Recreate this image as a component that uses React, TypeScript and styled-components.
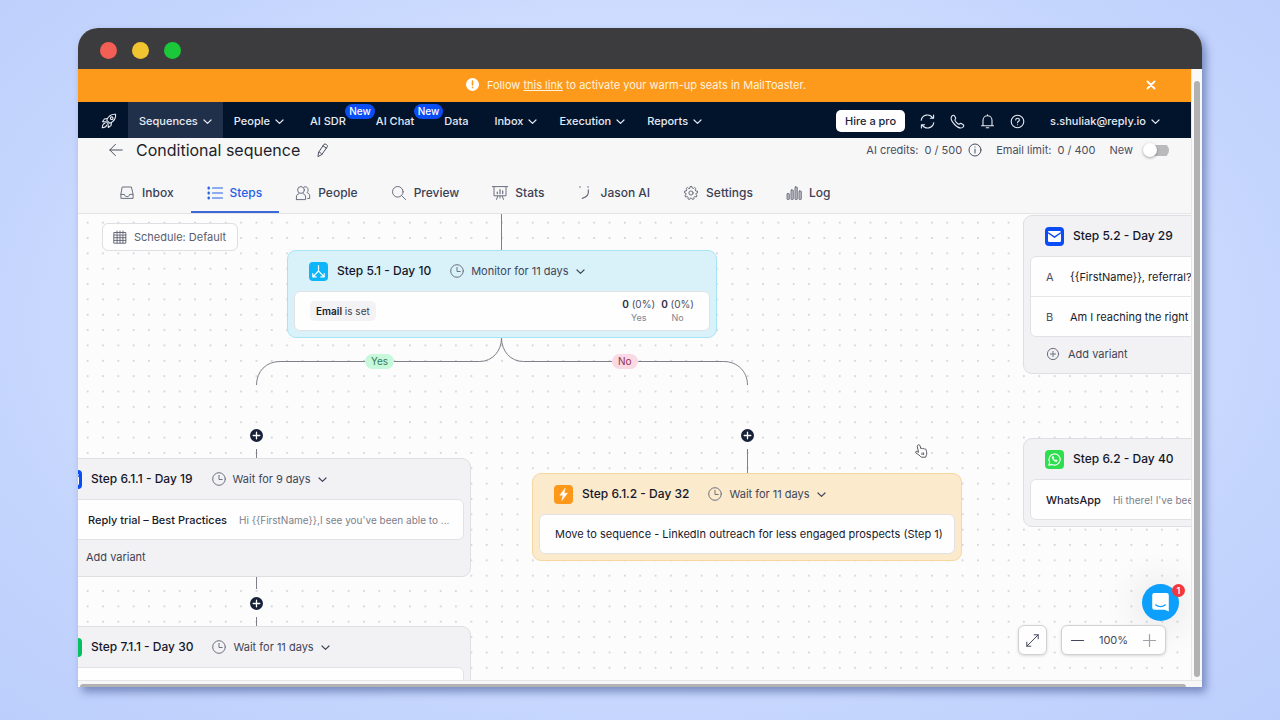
import React from "react";
import styled, { createGlobalStyle, css } from "styled-components";

const GlobalStyle = createGlobalStyle`
  *, *::before, *::after { box-sizing: border-box; }
  body {
    margin: 0;
    font-family: Inter, "Liberation Sans", sans-serif;
    font-size: 11px;
    line-height: 16px;
    color: #3b3f52;
  }
  button, input { font: inherit; color: inherit; }
  button { background: none; border: 0; padding: 0; cursor: pointer; }
  a { color: inherit; }
  svg { display: block; flex: none; overflow: visible; }
  p, h1, h2 { margin: 0; font: inherit; }
`;

/* ---------- icons ---------- */

type IconProps = {
  w?: number;
  h?: number;
  sw?: number;
  children: React.ReactNode;
};

const Icon = ({ w = 14, h = w, sw = 1, children }: IconProps) => (
  <svg
    width={w}
    height={h}
    viewBox={`0 0 ${w} ${h}`}
    fill="none"
    stroke="currentColor"
    strokeWidth={sw}
    strokeLinecap="round"
    strokeLinejoin="round"
    aria-hidden="true"
  >
    {children}
  </svg>
);

const Chevron = () => (
  <Icon w={9} sw={1.2}>
    <path d="M1 3l3.5 3.4L8 3" />
  </Icon>
);

const ClockIcon = () => (
  <Icon w={14}>
    <circle cx="7" cy="7" r="6.3" />
    <path d="M7 3.4V7.5h3.2" />
  </Icon>
);

const PlusCircle = () => (
  <Icon w={12}>
    <circle cx="6" cy="6" r="5.6" />
    <path d="M6 3.4v5.2M3.4 6h5.2" />
  </Icon>
);

const PlusSmall = () => (
  <Icon w={7} sw={1.3}>
    <path d="M3.5 .2v6.6M.2 3.5h6.6" />
  </Icon>
);

const RocketIcon = () => (
  <Icon w={16} sw={1.1}>
    <path d="M14.6 1.3c-3.7-.4-7 1.4-8.9 5.8l3.2 3.2c4.4-2 6.1-5.300 5.700-9z" />
    <circle cx="10.7" cy="5.2" r="1.3" />
    <path d="M6.400 5.500l-3 .5-1.900 2.700 3.300.2M10.500 9.500l-.5 3.100-2.700 1.900-.2-3.300" />
    <path d="M3.900 10.300c-1.500.3-2.500 1.900-2.600 4.400 2.500-.1 4-1.100 4.400-2.600M5.300 8.900l1.800 1.800" />
  </Icon>
);

const gear = Array.from({ length: 9 }, (_, i) => {
  const point = (deg: number, r: number) => {
    const a = ((i * 40 + deg - 90) * Math.PI) / 180;
    return `${(7 + r * Math.cos(a)).toFixed(2)} ${(7 + r * Math.sin(a)).toFixed(2)}`;
  };
  return [point(-12, 5.2), point(-8, 6.6), point(8, 6.6), point(12, 5.2)].join("L");
}).join("L");

const tabIcons: Record<string, React.ReactNode> = {
  Inbox: (
    <Icon w={14}>
      <path d="M2.6 1h8.8l1.700 7.400v4H.9v-4z" />
      <path d="M1 8.400h3.400c.2 3 5 3 5.200 0H13" />
    </Icon>
  ),
  Steps: (
    <Icon w={14} sw={1.2}>
      <path d="M4.500 2h10M4.500 7h10M4.500 12h10" />
      <path d="M.7 1.800v.6M.7 6.700v.6M.7 11.600v.6" strokeWidth="2.4" />
    </Icon>
  ),
  People: (
    <Icon w={14}>
      <circle cx="5" cy="4" r="3.4" />
      <path d="M.4 13.600v-2.600c0-1.700.9-2.800 2.400-3.300M7.200 7.700c1.500.5 2.400 1.600 2.400 3.300v2.600H.4" />
      <path d="M8.400.8c3.200-.8 4.900 2.700 2.800 5.900 1.500.6 2.500 1.500 2.500 3.200v2.600h-2" />
    </Icon>
  ),
  Preview: (
    <Icon w={14}>
      <circle cx="5.800" cy="5.800" r="5.300" />
      <path d="M9.700 9.700l3.900 3.900" />
    </Icon>
  ),
  Stats: (
    <Icon w={14}>
      <path d="M-.7 .6h15.400M1 .6v9.200h12V.6M4.800 10l-1.300 3.400M9.200 10l1.300 3.400M7 10v2" />
      <path d="M4.300 7.600V6M7 7.600V3.500M9.700 7.600V4.800" strokeWidth="1.2" />
    </Icon>
  ),
  "Jason AI": (
    <Icon w={14} sw={1.2}>
      <path d="M10.300 3.800c.7 4-1.800 7.300-6 8.500" />
      <path d="M2 1.100h.1M10 1.100h.1" strokeWidth="1.5" />
    </Icon>
  ),
  Settings: (
    <Icon w={14}>
      <path d={`M${gear}z`} />
      <circle cx="7" cy="7" r="2.1" />
    </Icon>
  ),
  Log: (
    <Icon w={14}>
      <g fill="#b9bbc6" strokeWidth="0.9">
        <rect x="0" y="7.500" width="2.3" height="6" rx="0.5" />
        <rect x="4" y="4" width="2.3" height="9.500" rx="0.5" />
        <rect x="8" y="1" width="2.3" height="12.500" rx="0.5" />
        <rect x="12" y="5" width="2.3" height="8.500" rx="0.5" />
      </g>
    </Icon>
  ),
};

/* ---------- window ---------- */

const Desktop = styled.div`
  min-height: 100vh;
  padding: 28px 78px 33px;
  display: flex;
  background: radial-gradient(ellipse at 50% 45%, #d9e6ff 0%, #d2e0ff 45%, #c3d4fd 75%, #bccefb 100%);
`;

const Window = styled.main`
  flex: 1;
  min-width: 0;
  display: flex;
  flex-direction: column;
  border-radius: 20px 20px 0 0;
  background: #f7f7f8;
  box-shadow: 4px 5px 9px rgba(68, 88, 150, 0.6);
`;

const TitleBar = styled.header`
  height: 41px;
  padding: 4px 22px 0;
  display: flex;
  align-items: center;
  gap: 15px;
  border-radius: 20px 20px 0 0;
  background: #3c3b3d;
`;

const Light = styled.span<{ $color: string }>`
  width: 17px;
  height: 17px;
  border-radius: 50%;
  background: ${(p) => p.$color};
`;

const Viewport = styled.div`
  flex: 1;
  display: grid;
  grid-template-columns: minmax(0, 1fr) 11px;
`;

const Page = styled.div`
  display: flex;
  flex-direction: column;
  overflow: hidden;
`;

const VerticalTrack = styled.div`
  padding: 12px 2px 3px;
  display: flex;
  border-left: 1px solid #e6e6e8;
  background: #f9f9fa;
`;

const HorizontalTrack = styled.div`
  height: 7px;
  padding: 3px 16px 0 2px;
  display: flex;
  border-top: 1px solid #e6e6e8;
  background: #f7f7f8;
`;

const Thumb = styled.div<{ $flat?: boolean }>`
  flex: 1;
  border-radius: ${(p) => (p.$flat ? "3px 3px 0 0" : "3px")};
  background: #b2b2b3;
`;

/* ---------- banner ---------- */

const Banner = styled.div`
  height: 33px;
  padding: 0 35px 2px 38px;
  display: grid;
  grid-template-columns: 1fr auto 1fr;
  align-items: center;
  background: #fd991b;
  color: #fff3de;
`;

const BannerText = styled.p`
  grid-column: 2;
  display: flex;
  align-items: center;
  gap: 8px;
`;

const Close = styled.button`
  justify-self: end;
  color: #fff;
`;

/* ---------- navigation ---------- */

const Nav = styled.nav`
  height: 36px;
  display: flex;
  align-items: stretch;
  background: #02132c;
  color: #e6ebf3;
  font-weight: 500;
`;

const Brand = styled.a`
  padding: 2px 10px 0 23px;
  display: flex;
  align-items: center;
  margin-right: 1px;
`;

const NavItem = styled.a<{ $active?: boolean; $plain?: boolean }>`
  position: relative;
  padding: 2px ${(p) => (p.$plain ? 15 : 11)}px 0;
  display: flex;
  align-items: center;
  gap: 5px;
  text-decoration: none;
  white-space: nowrap;
  ${(p) => p.$active && css`background: #21304a;`}
`;

const NewBadge = styled.span`
  position: absolute;
  z-index: 1;
  top: 2px;
  right: -14px;
  padding: 0 4px;
  border-radius: 8px;
  background: #0b4df5;
  color: #fff;
  font-size: 10px;
  line-height: 15px;
`;

const NavTools = styled.div`
  margin-left: auto;
  padding: 2px 31px 0 0;
  display: flex;
  align-items: center;
  gap: 15px;
`;

const HireButton = styled.button`
  height: 22px;
  padding: 0 9px;
  border-radius: 5px;
  background: #fff;
  color: #20263a;
  white-space: nowrap;
`;

const Account = styled.button`
  margin-left: 10px;
  display: flex;
  align-items: center;
  gap: 5px;
`;

/* ---------- sequence header ---------- */

const SequenceHeader = styled.header`
  height: 76px;
  display: flex;
  flex-direction: column;
  justify-content: space-between;
  border-bottom: 1px solid #e4e4e7;
  background: #f7f7f8;
`;

const TitleRow = styled.div`
  height: 24px;
  padding: 0 22px 0 31px;
  display: flex;
  align-items: center;
  color: #4b4e60;
`;

const Title = styled.h1`
  margin: 0 17px 0 13px;
  font-size: 16px;
  line-height: 24px;
  color: #1d1f2b;
  white-space: nowrap;
`;

const Credits = styled.div`
  margin-left: auto;
  display: flex;
  align-items: center;
  gap: 14px;
  white-space: nowrap;
`;

const Credit = styled.span`
  display: flex;
  align-items: center;
  gap: 6px;
`;

const Toggle = styled.label`
  display: flex;
  align-items: center;
  gap: 10px;
`;

const Switch = styled.input`
  appearance: none;
  width: 26px;
  height: 15px;
  margin: 0;
  display: flex;
  align-items: center;
  border-radius: 8px;
  background: linear-gradient(#bababd, #bababd) 100% 50% / 22px 11px no-repeat;
  &::before {
    content: "";
    width: 14px;
    height: 14px;
    border-radius: 50%;
    background: #fff;
    box-shadow: 0 1px 3px rgba(0, 0, 0, 0.35);
  }
`;

const Tabs = styled.nav`
  height: 42px;
  padding-left: 25px;
  display: flex;
`;

const Tab = styled.a<{ $active?: boolean }>`
  padding: 3px 17px 0;
  display: flex;
  align-items: center;
  gap: 8px;
  border-bottom: 2px solid ${(p) => (p.$active ? "#3c68d8" : "transparent")};
  color: ${(p) => (p.$active ? "#2560e6" : "#3b3f54")};
  font-size: 12px;
  font-weight: 500;
  text-decoration: none;
  white-space: nowrap;
  svg { color: ${(p) => (p.$active ? "#2560e6" : "#6c6f7e")}; }
`;

/* ---------- canvas ---------- */

const Canvas = styled.section`
  position: relative;
  flex: 1;
  min-height: 440px;
  overflow: hidden;
  background: #fcfcfd;
`;

const Layer = styled.svg`
  position: absolute;
  inset: 0;
  width: 100%;
  height: 100%;
`;

const Schedule = styled.button`
  position: absolute;
  top: 9px;
  left: 24px;
  height: 28px;
  padding: 0 11px 0 10px;
  display: flex;
  align-items: center;
  gap: 7px;
  border: 1px solid #dedee3;
  border-radius: 6px;
  background: #fefefe;
  color: #5a5d6e;
  white-space: nowrap;
`;

const tones = {
  grey: { bg: "#f2f2f4", line: "#dfdfe3" },
  blue: { bg: "#d9f2fa", line: "#a6e4f6" },
  amber: { bg: "#fbeacc", line: "#f6d7a0" },
};

const Card = styled.article<{ $x: number; $y: number; $tone: keyof typeof tones; $variants?: boolean }>`
  position: absolute;
  left: ${(p) => p.$x}px;
  top: ${(p) => p.$y}px;
  width: 430px;
  padding: 0 6px ${(p) => (p.$variants ? 3 : 6)}px;
  border: 1px solid ${(p) => tones[p.$tone].line};
  border-radius: 9px;
  background: ${(p) => tones[p.$tone].bg};
`;

const CardHead = styled.header`
  height: 40px;
  padding-left: 15px;
  display: flex;
  align-items: center;
`;

const Tile = styled.span<{ $color: string }>`
  width: 19px;
  height: 19px;
  display: flex;
  align-items: center;
  justify-content: center;
  border-radius: 4px;
  background: ${(p) => p.$color};
  color: #fff;
`;

const CardTitle = styled.h2`
  margin: 0 19px 0 9px;
  font-size: 12px;
  font-weight: 500;
  color: #14172b;
  white-space: nowrap;
`;

const Wait = styled.button`
  display: flex;
  align-items: center;
  gap: 7px;
  color: #3f4558;
  white-space: nowrap;
  svg:first-child { color: #6d7080; }
`;

const Body = styled.div`
  border: 1px solid #e2e2e6;
  border-radius: 6px;
  background: #fefefe;
`;

const Row = styled.div<{ $compact?: boolean }>`
  height: ${(p) => (p.$compact ? 38 : 39)}px;
  padding: 0 15px;
  display: flex;
  align-items: center;
  color: #171a2c;
  white-space: nowrap;
  & + & {
    height: 40px;
    border-top: 1px solid #e6e6e9;
  }
`;

const Letter = styled.span`
  flex: none;
  width: 24px;
  color: #4a4d5e;
`;

const Subject = styled.span`
  font-weight: 500;
`;

const Snippet = styled.span`
  margin-left: 12px;
  font-size: 10px;
  color: #7c7f8c;
`;

const Chip = styled.span`
  padding: 2px 6px;
  border-radius: 5px;
  background: #f3f3f5;
  font-size: 10px;
  color: #3f4254;
  b { font-weight: 600; color: #171a2c; }
`;

const Counts = styled.div`
  margin-left: auto;
  display: flex;
  gap: 6px;
`;

const Count = styled.p`
  display: flex;
  flex-direction: column;
  align-items: center;
  font-size: 10px;
  line-height: 13px;
  color: #4a4d5e;
  b { font-weight: 600; color: #2a2d3e; }
  small { font-size: 9px; color: #80838f; }
`;

const AddVariant = styled.button`
  height: 33px;
  padding-left: 17px;
  display: flex;
  align-items: center;
  gap: 9px;
  color: #3f4254;
  svg { color: #6d7080; }
`;

const Pill = styled.span<{ $x: number; $tone: "yes" | "no" }>`
  position: absolute;
  left: ${(p) => p.$x}px;
  top: 140px;
  padding: 0 6px;
  border-radius: 8px;
  font-size: 10px;
  line-height: 15px;
  background: ${(p) => (p.$tone === "yes" ? "#c6f8dc" : "#fbd9e2")};
  color: ${(p) => (p.$tone === "yes" ? "#397a5b" : "#93304f")};
`;

const AddStep = styled.button<{ $x: number; $y: number }>`
  position: absolute;
  left: ${(p) => p.$x}px;
  top: ${(p) => p.$y}px;
  width: 13px;
  height: 13px;
  display: flex;
  align-items: center;
  justify-content: center;
  border-radius: 50%;
  background: #18213a;
  color: #fff;
`;

const Controls = styled.div`
  position: absolute;
  right: 25px;
  bottom: 25px;
  display: flex;
  align-items: center;
  gap: 14px;
`;

const ControlBox = styled.div`
  height: 30px;
  display: flex;
  align-items: center;
  border: 1px solid #d2d2d6;
  border-radius: 6px;
  background: #fefefe;
  box-shadow: 0 1px 3px rgba(0, 0, 0, 0.15);
  color: #44475a;
`;

const ControlButton = styled.button<{ $wide?: boolean; $muted?: boolean }>`
  width: ${(p) => (p.$wide ? 31 : 27)}px;
  height: 28px;
  display: flex;
  align-items: center;
  justify-content: center;
  opacity: ${(p) => (p.$muted ? 0.5 : 1)};
`;

const ZoomValue = styled.output`
  width: 41px;
  text-align: center;
`;

const Chat = styled.button`
  position: absolute;
  right: 12px;
  bottom: 59px;
  width: 37px;
  height: 37px;
  display: flex;
  align-items: center;
  justify-content: center;
  border-radius: 50%;
  background: #0c9ffb;
  box-shadow: 0 2px 40px rgba(0, 0, 0, 0.16);
`;

const Unread = styled.span`
  position: absolute;
  top: 0;
  right: -6px;
  width: 13px;
  height: 13px;
  border-radius: 50%;
  background: #f2383c;
  color: #fff;
  font-size: 9px;
  font-weight: 600;
  line-height: 13px;
  text-align: center;
`;

const Pointer = styled.svg`
  position: absolute;
  left: 837px;
  top: 230px;
`;

const MailIcon = () => (
  <Icon w={13} h={11}>
    <rect x="0.5" y="0.5" width="12" height="10" rx="0.5" fill="#fff" />
    <path d="M.5 2l6 4.200 6-4.200" stroke="#0b4df5" strokeWidth="1.5" />
  </Icon>
);

const BranchIcon = () => (
  <Icon w={13} sw={1.2}>
    <path d="M6.500 .5v5.500L1.200 11.600M6.500 6l5.300 5.600M.8 8.500v3.400h3.400M12.200 8.500v3.400H8.800" />
  </Icon>
);

const BoltIcon = () => (
  <Icon w={13}>
    <path d="M8 .5L2.800 7.200h3.200L4.800 12.500l5.600-7.300H7.200z" fill="currentColor" strokeWidth="0.5" />
  </Icon>
);

const WhatsAppIcon = () => (
  <Icon w={13} sw={1.1}>
    <path d="M.8 12.200l.9-3A5.600 5.600 0 1 1 3.900 11.400z" />
    <path
      d="M4.500 3.500c-.8.6-.5 2 .8 3.500 1.400 1.500 3 2.100 3.900 1.200l.2-.8-1.400-.7-.8.6c-.9-.4-1.400-1-1.800-1.800l.5-.7-.6-1.300z"
      fill="currentColor"
      strokeWidth="0.4"
    />
  </Icon>
);

type StepCardProps = {
  x: number;
  y: number;
  tone?: keyof typeof tones;
  color: string;
  icon?: React.ReactNode;
  title: string;
  wait?: string;
  variants?: boolean;
  children: React.ReactNode;
};

const StepCard = ({ x, y, tone = "grey", color, icon, title, wait, variants, children }: StepCardProps) => (
  <Card $x={x} $y={y} $tone={tone} $variants={variants}>
    <CardHead>
      <Tile $color={color}>{icon}</Tile>
      <CardTitle>{title}</CardTitle>
      {wait && (
        <Wait>
          <ClockIcon />
          {wait}
          <Chevron />
        </Wait>
      )}
    </CardHead>
    <Body>{children}</Body>
    {variants && (
      <AddVariant>
        <PlusCircle />
        Add variant
      </AddVariant>
    )}
  </Card>
);

export default function App() {
  return (
    <>
      <GlobalStyle />
      <Desktop>
        <Window>
          <TitleBar>
            <Light $color="#f45f55" />
            <Light $color="#f1c52f" />
            <Light $color="#1bc83a" />
          </TitleBar>
          <Viewport>
            <Page>
              <Banner>
                <BannerText>
                  <svg width="13" height="13" viewBox="0 0 13 13" aria-hidden="true">
                    <circle cx="6.500" cy="6.500" r="6.500" fill="#fff" />
                    <path d="M6.500 3v4M6.500 9.200v.4" stroke="#fd991b" strokeWidth="1.6" strokeLinecap="round" />
                  </svg>
                  <span>
                    Follow <a href="#activate">this link</a> to activate your warm-up seats in MailToaster.
                  </span>
                </BannerText>
                <Close aria-label="Dismiss">
                  <Icon w={10} sw={1.8}>
                    <path d="M1.500 1.500l7 7M8.500 1.500l-7 7" />
                  </Icon>
                </Close>
              </Banner>

              <Nav>
                <Brand href="#home" aria-label="Home">
                  <RocketIcon />
                </Brand>
                <NavItem href="#sequences" $active>Sequences <Chevron /></NavItem>
                <NavItem href="#people">People <Chevron /></NavItem>
                <NavItem href="#sdr" $plain>AI SDR<NewBadge>New</NewBadge></NavItem>
                <NavItem href="#chat" $plain>AI Chat<NewBadge>New</NewBadge></NavItem>
                <NavItem href="#data" $plain>Data</NavItem>
                <NavItem href="#inbox">Inbox <Chevron /></NavItem>
                <NavItem href="#execution">Execution <Chevron /></NavItem>
                <NavItem href="#reports">Reports <Chevron /></NavItem>
                <NavTools>
                  <HireButton>Hire a pro</HireButton>
                  <button aria-label="Sync">
                    <Icon w={15} sw={1.1}>
                      <path d="M1.200 6.300a6.300 6.300 0 0 1 11.500-2.400M13.800 8.700a6.300 6.300 0 0 1-11.500 2.400M13.600 1v3.200h-3.200M1.400 14v-3.200h3.200" />
                    </Icon>
                  </button>
                  <button aria-label="Calls">
                    <Icon w={15} sw={1.1}>
                      <path d="M1.600 2.300C3 .7 4 1 4.700 2.200l.9 1.600c.4.8 0 1.300-.6 1.900-.3.4 0 .9.4 1.500.8 1.100 1.500 1.800 2.500 2.500.6.4 1 .6 1.400.3.6-.6 1.200-.9 1.900-.5l1.700 1c1.200.8 1.300 1.600-.2 2.900C8.400 16.100-.9 6.700 1.600 2.300z" />
                    </Icon>
                  </button>
                  <button aria-label="Notifications">
                    <Icon w={15} sw={1.1}>
                      <path d="M3 11.700V6.200a4.500 4.500 0 0 1 9 0v5.500M1.500 11.800h12M6.200 13.800h2.600M7.500 1.600V.8" />
                    </Icon>
                  </button>
                  <button aria-label="Help">
                    <Icon w={15} sw={1.1}>
                      <circle cx="7.500" cy="7.500" r="6.300" />
                      <path d="M5.700 6c.1-2.300 3.700-2.200 3.700 0 0 1.300-1.900 1.300-1.900 2.800M7.500 10.700v.1" />
                    </Icon>
                  </button>
                  <Account>s.shuliak@reply.io <Chevron /></Account>
                </NavTools>
              </Nav>

              <SequenceHeader>
                <TitleRow>
                  <button aria-label="Back">
                    <Icon w={14}>
                      <path d="M.8 7h12.400M6.400 1.400L.8 7l5.600 5.600" />
                    </Icon>
                  </button>
                  <Title>Conditional sequence</Title>
                  <button aria-label="Rename">
                    <Icon w={12} h={14}>
                      <path d="M1 13.200l.6-3.900L7 1.300c.9-1.200 4.200 1 3.400 2.300L5 11.300zM6 2.900l3.500 2.300M1.700 9.300c1.400 0 2.800.8 3.200 2" />
                    </Icon>
                  </button>
                  <Credits>
                    <Credit>
                      <span>AI credits:</span>
                      <span>0 / 500</span>
                      <Icon w={14}>
                        <circle cx="7" cy="7" r="6" />
                        <path d="M7 6.200v3.800M7 3.900v.2" />
                      </Icon>
                    </Credit>
                    <Credit>
                      <span>Email limit:</span>
                      <span>0 / 400</span>
                    </Credit>
                    <Toggle>
                      New
                      <Switch type="checkbox" />
                    </Toggle>
                  </Credits>
                </TitleRow>
                <Tabs>
                  {Object.keys(tabIcons).map((name) => (
                    <Tab key={name} href={`#${name}`} $active={name === "Steps"}>
                      {tabIcons[name]}
                      {name}
                    </Tab>
                  ))}
                </Tabs>
              </SequenceHeader>

              <Canvas>
                <Layer aria-hidden="true">
                  <defs>
                    <pattern id="grid" x="2" y="1" width="15.35" height="15.35" patternUnits="userSpaceOnUse">
                      <circle cx="7.6" cy="7.6" r="0.8" fill="#bfc1ca" />
                    </pattern>
                  </defs>
                  <rect width="100%" height="100%" fill="url(#grid)" />
                  <g fill="none" stroke="#7d8086">
                    <path d="M423.500 0v37M178.500 235v10M669.500 235v25M178.500 363v12M178.500 403v10" />
                    <path d="M423.500 124c0 13-9 23.500-22 23.500H202c-14 0-23.500 10-23.500 23.500" />
                    <path d="M423.500 124c0 13 9 23.500 22 23.500h200c14 0 24 10 24 23.500" />
                  </g>
                </Layer>

                <Schedule>
                  <Icon w={14}>
                    <path
                      d="M1.200 2.500h11.600v10.700H1.200zM1.200 5h11.600M4 1v2.500M7 1v2.500M10 1v2.500M1.200 7.700h11.600M1.200 10.400h11.600M4.100 5v8M7 5v8M9.900 5v8"
                      strokeWidth="0.9"
                    />
                  </Icon>
                  Schedule: Default
                </Schedule>

                <StepCard x={209} y={36} tone="blue" color="#0db5fa" icon={<BranchIcon />} title="Step 5.1 - Day 10" wait="Monitor for 11 days">
                  <Row $compact>
                    <Chip><b>Email</b> is set</Chip>
                    <Counts>
                      <Count><span><b>0</b> (0%)</span><small>Yes</small></Count>
                      <Count><span><b>0</b> (0%)</span><small>No</small></Count>
                    </Counts>
                  </Row>
                </StepCard>
                <Pill $x={287} $tone="yes">Yes</Pill>
                <Pill $x={534} $tone="no">No</Pill>

                <AddStep $x={172} $y={215} aria-label="Add step"><PlusSmall /></AddStep>
                <AddStep $x={663} $y={215} aria-label="Add step"><PlusSmall /></AddStep>
                <AddStep $x={172} $y={383} aria-label="Add step"><PlusSmall /></AddStep>

                <StepCard x={-37} y={244} color="#0b4df5" icon={<MailIcon />} title="Step 6.1.1 - Day 19" wait="Wait for 9 days" variants>
                  <Row>
                    <Letter />
                    <Subject>Reply trial – Best Practices</Subject>
                    <Snippet>Hi {"{{FirstName}}"},I see you've been able to ...</Snippet>
                  </Row>
                </StepCard>

                <StepCard x={-37} y={412} color="#05bf63" title="Step 7.1.1 - Day 30" wait="Wait for 11 days">
                  <Row />
                </StepCard>

                <StepCard x={454} y={259} tone="amber" color="#fd981a" icon={<BoltIcon />} title="Step 6.1.2 - Day 32" wait="Wait for 11 days">
                  <Row $compact>Move to sequence - LinkedIn outreach for less engaged prospects (Step 1)</Row>
                </StepCard>

                <StepCard x={945} y={1} color="#0b4df5" icon={<MailIcon />} title="Step 5.2 - Day 29" variants>
                  <Row><Letter>A</Letter>{"{{FirstName}}, referral?"}</Row>
                  <Row><Letter>B</Letter>Am I reaching the right person?</Row>
                </StepCard>

                <StepCard x={945} y={224} color="#2fde4e" icon={<WhatsAppIcon />} title="Step 6.2 - Day 40">
                  <Row>
                    <Subject>WhatsApp</Subject>
                    <Snippet>Hi there! I've been</Snippet>
                  </Row>
                </StepCard>

                <Pointer width="13" height="14" viewBox="0 0 13 14" aria-hidden="true">
                  <path
                    d="M3.200 1c.9-.5 1.600 0 1.800.8l.9 3c.6-.8 1.500-.6 1.800.1.6-.6 1.400-.4 1.700.2.7-.4 1.500-.1 1.700.7.5 2 1.200 4.300-.1 6.200l-.3 1.200H6.300C5 11.500 2.700 10.200.8 8.800c-.7-.9.3-1.900 1.300-1.300l1.400.8L2.300 2.400c-.1-.6.2-1.100.9-1.400zM7 8.500v2.500M8.600 8.500V11"
                    fill="#fff"
                    stroke="#45474f"
                    strokeWidth="0.9"
                    strokeLinejoin="round"
                  />
                </Pointer>

                <Chat aria-label="Open chat">
                  <svg width="17" height="19" viewBox="0 0 17 19" aria-hidden="true">
                    <path d="M2.500 0h12A2.300 2.300 0 0 1 16.800 2.300V18.600L12.500 16.800h-10A2.300 2.300 0 0 1 .2 14.500V2.300A2.300 2.300 0 0 1 2.500 0z" fill="#fff" />
                    <path d="M3.600 11.800c2.800 2.300 7 2.300 9.800 0" fill="none" stroke="#0c9ffb" strokeWidth="1.2" strokeLinecap="round" />
                  </svg>
                  <Unread>1</Unread>
                </Chat>

                <Controls>
                  <ControlBox>
                    <ControlButton aria-label="Fit to screen">
                      <Icon w={13}>
                        <path d="M.8 12.200L12.200.8M8.200.8h4v4M.8 8.200v4h4" />
                      </Icon>
                    </ControlButton>
                  </ControlBox>
                  <ControlBox>
                    <ControlButton $wide aria-label="Zoom out">
                      <Icon w={13} sw={1.2}><path d="M.5 6.500h12" /></Icon>
                    </ControlButton>
                    <ZoomValue>100%</ZoomValue>
                    <ControlButton $wide $muted aria-label="Zoom in">
                      <Icon w={13} sw={1.2}><path d="M.5 6.500h12M6.500 .5v12" /></Icon>
                    </ControlButton>
                  </ControlBox>
                </Controls>
              </Canvas>
            </Page>
            <VerticalTrack>
              <Thumb />
            </VerticalTrack>
          </Viewport>
          <HorizontalTrack>
            <Thumb $flat />
          </HorizontalTrack>
        </Window>
      </Desktop>
    </>
  );
}
